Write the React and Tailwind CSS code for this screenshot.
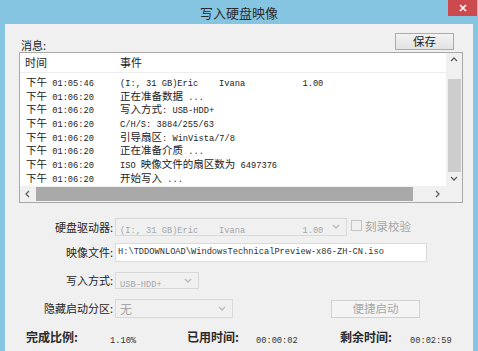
import React from 'react'

const CJK_RE = /([\u3000-\u303f\u4e00-\u9fff\uff00-\uffef]+)/

const LOG = [
  ['01:05:46', '(I:, 31 GB)Eric    Ivana           1.00'],
  ['01:06:20', '正在准备数据 ...'],
  ['01:06:20', '写入方式: USB-HDD+'],
  ['01:06:20', 'C/H/S: 3884/255/63'],
  ['01:06:20', '引导扇区: WinVista/7/8'],
  ['01:06:20', '正在准备介质 ...'],
  ['01:06:20', 'ISO 映像文件的扇区数为 6497376'],
  ['01:06:20', '开始写入 ...'],
]

// CJK runs get a CJK font, the rest a narrow mono face (like SimSun's half-width glyphs)
function Mixed({ text, small }) {
  return text.split(CJK_RE).map((s, i) =>
    CJK_RE.test(s) ? (
      <span
        key={i}
        className={`${small ? 'text-[10.5px]' : 'text-[11px]'} leading-none font-['Noto_Sans_CJK_SC',sans-serif]`}
      >
        {s}
      </span>
    ) : (
      <span key={i} className="text-[8.7px] leading-none font-['Liberation_Mono',monospace] whitespace-pre">{s}</span>
    )
  )
}

function Chevron({ dir = 'down', className = '' }) {
  const pts = {
    up: '1,5 4,2 7,5',
    down: '1,2 4,5 7,2',
    left: '5,1 2,4 5,7',
    right: '2,1 5,4 2,7',
  }[dir]
  return (
    <svg width="8" height="8" viewBox="0 0 8 8" className={className}>
      <polyline points={pts} fill="none" stroke="currentColor" strokeWidth="1.3" />
    </svg>
  )
}

function Label({ children }) {
  return <div className="w-[94px] text-right text-[11px] leading-none text-[#1e1e1e]">{children}</div>
}

export default function App() {
  return (
    <div className="w-[478px] h-[351px] overflow-hidden bg-[#86c5e2] flex flex-col font-['Noto_Sans_CJK_SC',sans-serif] text-[#1e1e1e]">
      {/* title bar */}
      <div className="relative h-[24px] shrink-0 flex items-center justify-center">
        <span className="text-[13px] text-[#2a2a2a] leading-none">写入硬盘映像</span>
        <div className="absolute right-[1px] top-0 w-[29px] h-[16px] bg-[#cc4a4d] flex items-center justify-center text-white">
          <svg width="8" height="8" viewBox="0 0 8 8">
            <path d="M1 1L7 7M7 1L1 7" stroke="currentColor" strokeWidth="1.6" />
          </svg>
        </div>
      </div>

      {/* body */}
      <div className="flex-1 mx-[5px] bg-[#f0f0f0] pl-[14px] pr-[10px] pt-[9px] flex flex-col">
        <div className="flex justify-between h-[17px]">
          <span className="self-end text-[11px] leading-none ml-[2px] -mb-[1px]">消息:</span>
          <button className="w-[59px] h-[17px] mr-[9px] border border-[#acacac] bg-gradient-to-b from-[#f2f2f2] to-[#e3e3e3] text-[11.5px] leading-none text-[#222]">
            保存
          </button>
        </div>

        {/* log list */}
        <div className="mt-[2px] h-[151px] border border-[#a8a8a8] bg-white flex flex-col">
          <div className="flex flex-1 min-h-0">
            <div className="flex-1 overflow-hidden">
              <div className="h-[20px] flex items-center border-b border-[#ededed] text-[11px] leading-none">
                <span className="w-[100px] pl-[5px]">时间</span>
                <span>事件</span>
              </div>
              {LOG.map(([t, ev], i) => (
                <div key={i} className="h-[13.7px] flex items-center leading-none text-[#222]">
                  <span className="w-[100px] pl-[6px] whitespace-nowrap">
                    <Mixed small text={`下午 ${t}`} />
                  </span>
                  <span className="whitespace-nowrap">
                    <Mixed small text={ev} />
                  </span>
                </div>
              ))}
            </div>
            <div className="w-[16px] bg-[#f0f0f0] flex flex-col items-center text-[#606060]">
              <div className="h-[14px] flex items-center justify-center"><Chevron dir="up" /></div>
              <div className="h-[12px]" />
              <div className="flex-1 w-[13px] bg-[#cdcdcd]" />
              <div className="h-[14px] flex items-center justify-center"><Chevron dir="down" /></div>
            </div>
          </div>
          <div className="h-[16px] flex bg-[#f0f0f0] text-[#606060]">
            <div className="w-[16px] flex items-center justify-center"><Chevron dir="left" /></div>
            <div className="w-[377px] h-[14px] self-center bg-[#a9a9a9]" />
            <div className="flex-1" />
            <div className="w-[16px] flex items-center justify-center"><Chevron dir="right" /></div>
            <div className="w-[16px]" />
          </div>
        </div>

        {/* form */}
        <div className="mt-[15px] h-[18px] flex items-center">
          <Label>硬盘驱动器:</Label>
          <div className="ml-[2px] w-[232px] h-[18px] border border-[#d9d9d9] flex items-center pl-[4px] pr-[6px] text-[#a6a6a6] leading-none">
            <span className="flex-1 whitespace-nowrap"><Mixed text="(I:, 31 GB)Eric    Ivana           1.00" /></span>
            <Chevron dir="down" className="text-[#b8b8b8]" />
          </div>
          <div className="ml-[4px] w-[11px] h-[11px] border border-[#c4c4c4] mb-[4px]" />
          <span className="ml-[3px] text-[11.5px] leading-none text-[#a6a6a6]">刻录校验</span>
        </div>

        <div className="mt-[7px] h-[19px] flex items-center">
          <Label>映像文件:</Label>
          <div className="ml-[2px] w-[312px] h-[19px] border border-[#dadada] bg-white flex items-center pl-[2px] text-[#333] leading-none">
            <Mixed text="H:\TDDOWNLOAD\WindowsTechnicalPreview-x86-ZH-CN.iso" />
          </div>
        </div>

        <div className="mt-[10px] h-[17px] flex items-center">
          <Label>写入方式:</Label>
          <div className="ml-[2px] w-[84px] h-[17px] border border-[#d9d9d9] flex items-center pl-[4px] pr-[6px] text-[#a6a6a6] leading-none">
            <span className="flex-1"><Mixed text="USB-HDD+" /></span>
            <Chevron dir="down" className="text-[#b8b8b8]" />
          </div>
        </div>

        <div className="mt-[10px] h-[19px] flex items-center">
          <Label>隐藏启动分区:</Label>
          <div className="ml-[2px] w-[118px] h-[19px] border border-[#d9d9d9] flex items-center pl-[4px] pr-[6px] text-[#a6a6a6] leading-none">
            <span className="flex-1 text-[12px]">无</span>
            <Chevron dir="down" className="text-[#b8b8b8]" />
          </div>
          <button className="ml-[98px] w-[89px] h-[18px] border border-[#d2d2d2] bg-[#f4f4f4] text-[11.5px] leading-none text-[#a8a8a8]">
            便捷启动
          </button>
        </div>

        <div className="mt-[10px] flex items-center pl-[7px] leading-none">
          <span className="w-[84px] text-[12px] font-bold text-[#2a2a2a]">完成比例:</span>
          <span className="w-[77px] text-[#333]"><Mixed text="1.10%" /></span>
          <span className="w-[69px] text-[12px] font-bold text-[#2a2a2a]">已用时间:</span>
          <span className="w-[84px] text-[#333]"><Mixed text="00:00:02" /></span>
          <span className="w-[70px] text-[12px] font-bold text-[#2a2a2a]">剩余时间:</span>
          <span className="text-[#333]"><Mixed text="00:02:59" /></span>
        </div>
      </div>
    </div>
  )
}
